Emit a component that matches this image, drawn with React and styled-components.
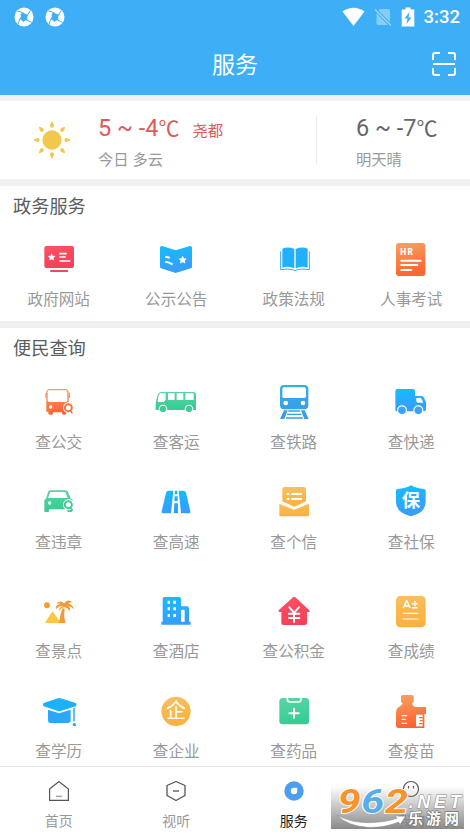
import styled, { createGlobalStyle } from 'styled-components'

const star = (cx, cy, r) => {
  const pts = []
  for (let i = 0; i < 10; i++) {
    const a = (Math.PI / 5) * i - Math.PI / 2
    const d = i % 2 ? r * 0.5 : r
    pts.push(`${(cx + d * Math.cos(a)).toFixed(1)},${(cy + d * Math.sin(a)).toFixed(1)}`)
  }
  return pts.join(' ')
}

const WebsiteIcon = () => (
  <g>
    <rect x='22' y='21' width='89' height='66' rx='6' fill='url(#red)' />
    <path d='M42 96H91' stroke='#f8465e' strokeWidth='6' strokeLinecap='round' />
    <polygon points={star(44, 55, 12)} fill='#fff' />
    <path d='M67 44H89M67 54H86M67 66H100' stroke='#fff' strokeWidth='5' />
  </g>
)

const NoticeIcon = () => (
  <g>
    <path d='M18 26Q18 20 24 21L65 34L108 21Q114 20 114 26V84Q114 87 111 88L65 102L21 88Q18 87 18 84Z' fill='url(#blue)' />
    <path d='M34 53L47 56M34 68L43 70L56 76' fill='none' stroke='#fff' strokeWidth='6' />
    <polygon points={star(86, 63, 13)} fill='#fff' />
  </g>
)

const LawIcon = () => (
  <g>
    <path d='M31 29Q48 22 67 30V88Q50 80 31 86Z M71 30Q90 22 107 29V86Q89 80 71 88Z' fill='#22b0fb' />
    <path d='M26 37V92Q48 88 61 92Q69 98 77 92Q90 88 112 92V37' fill='none' stroke='#3aa9f8' strokeWidth='3' />
  </g>
)

const ExamIcon = () => (
  <g>
    <rect x='21' y='12' width='88' height='99' rx='9' fill='url(#orange)' />
    <text x='34' y='47' fontSize='25' fontWeight='900' textLength='38' lengthAdjust='spacing' fontFamily='Roboto, sans-serif' fill='#fff'>HR</text>
    <path d='M37 65H95M37 78H85M37 93H67' stroke='#fff' strokeWidth='6' strokeLinecap='round' />
  </g>
)

const Magnifier = ({ color, y }) => (
  <g>
    <circle cx='95' cy={y} r='17' fill='#fff' />
    <circle cx='94' cy={y} r='10.5' fill='#fff' stroke={color} strokeWidth='6' />
    <path d={`M100 ${y + 9}L105 ${y + 15}`} stroke={color} strokeWidth='5' strokeLinecap='round' />
  </g>
)

const BusIcon = () => (
  <g>
    <path d='M38 21H84Q95 21 95 32V87H88V94Q88 98 84 98H79Q75 98 75 94V91H48V94Q48 98 44 98H38Q34 98 34 94V89H28V32Q28 21 38 21Z' fill='url(#orange)' />
    <path d='M27 34V46M97 34V46' stroke='#f6934f' strokeWidth='4' strokeLinecap='round' />
    <rect x='32' y='25' width='59' height='35' rx='5' fill='#fff' />
    <circle cx='41' cy='75' r='5' fill='#fff' />
    <Magnifier color='#f6763c' y={77} />
  </g>
)

const CoachIcon = () => (
  <g>
    <path d='M23 30H118Q126 30 126 38V84H5V67Q6 53 11 39Q14 30 23 30Z' fill='url(#green)' />
    <path d='M18 34H35V53L29 60H11Q11 48 15 38Z M42 34H62V54H42Z M68 34H88V54H68Z M94 34H119V54H94Z' fill='#fff' />
    <circle cx='27' cy='81' r='13' fill='#fff' />
    <circle cx='105' cy='81' r='13' fill='#fff' />
    <circle cx='27' cy='81' r='9.5' fill='#42ca94' />
    <circle cx='105' cy='81' r='9.5' fill='#42ca94' />
  </g>
)

const TrainIcon = () => (
  <g>
    <rect x='24' y='9' width='85' height='73' rx='12' fill='url(#train)' />
    <rect x='31' y='16' width='71' height='32' rx='5' fill='#fff' />
    <circle cx='41' cy='63' r='7' fill='#fff' />
    <circle cx='93' cy='63' r='7' fill='#fff' />
    <path d='M36 85H47L37 111H24Z M87 85H98L110 111H97Z' fill='#359ee8' />
    <path d='M49 87H84M45 97H88M42 108H92' stroke='#359ee8' strokeWidth='4' />
  </g>
)

const TruckIcon = () => (
  <g>
    <path d='M26 21H71Q78 21 78 28V42H98Q103 42 105 47L111 60V82Q111 88 105 88H24Q19 88 19 83V28Q19 21 26 21Z' fill='url(#blue)' />
    <path d='M82 48H96L103 62H87Q82 62 82 57Z' fill='#fff' />
    <circle cx='39' cy='85' r='15' fill='#fff' />
    <circle cx='88' cy='85' r='15' fill='#fff' />
    <circle cx='39' cy='85' r='11.5' fill='#37a5fb' />
    <circle cx='88' cy='85' r='11.5' fill='#37a5fb' />
  </g>
)

const CarIcon = () => (
  <g>
    <path d='M39 25H86Q91 25 93 30L100 48L107 54V85Q107 90 102 90H94Q91 90 91 87V82H36V86Q36 90 32 90H26Q22 90 22 86V55L28 48L33 30Q35 25 39 25Z' fill='url(#green)' />
    <path d='M40 30H85L92 48H33Z' fill='#fff' />
    <circle cx='38' cy='63' r='5' fill='#fff' />
    <Magnifier color='#42ca94' y={68} />
  </g>
)

const RoadIcon = () => (
  <g fill='url(#blue)'>
    <path d='M43 26H58L51 94H27Q22 94 23 88L36 32Q38 26 43 26Z' />
    <path d='M74 26H88Q94 26 96 32L109 88Q110 94 105 94H81Z' />
    <path d='M63 26H70V37H62Z M62 43H71V57H61Z M61 64H72V94H59Z' />
  </g>
)

const LetterIcon = () => (
  <g>
    <path d='M38 15H95Q102 15 102 22V58L67 74L31 58V22Q31 15 38 15Z' fill='url(#yellow)' />
    <path d='M22 65L66 83L111 65V98Q111 103 106 103H27Q22 103 22 98Z' fill='url(#yellow)' />
    <path d='M44 36H52M58 36H90M44 51H52M58 51H90' stroke='#fff' strokeWidth='6' />
  </g>
)

const ShieldIcon = () => (
  <g>
    <path d='M66 10Q82 20 105 21Q110 21 110 26V60Q110 92 66 103Q21 92 21 60V26Q21 21 26 21Q50 20 66 10Z' fill='url(#blue)' />
    <text x='66' y='76' fontSize='55' fontWeight='700' textAnchor='middle' fill='#fff'>保</text>
  </g>
)

const SceneryIcon = () => (
  <g>
    <circle cx='30' cy='43' r='9' fill='#f5a02c' />
    <path d='M24 96L43 65Q46 60 50 65L72 96Z' fill='#fbc83f' />
    <path d='M66 96Q70 67 77 51L83 53Q79 74 85 96Z' fill='#f39a33' />
    <path d='M79 46Q67 43 57 54Q54 40 71 39Q64 36 58 40Q66 24 82 37Q91 22 107 34Q98 34 94 38Q109 40 111 56Q103 46 92 46Q102 50 99 60Q91 49 82 48Q72 50 66 60Q65 50 79 46Z' fill='#f39a33' />
  </g>
)

const HotelIcon = () => (
  <g>
    <path d='M31 18H75Q81 18 81 24V46H98Q105 46 105 53V92H110V101H22V92H26V24Q26 18 31 18Z' fill='url(#blue)' />
    <path d='M41 29H48V38H41ZM58 29H66V38H58ZM41 49H48V58H41ZM58 49H66V58H58ZM41 69H48V78H41ZM58 69H66V78H58ZM81 56H92V92H81Z' fill='#fff' />
  </g>
)

const FundIcon = () => (
  <g>
    <path d='M63 19Q66 16 70 19L112 58Q115 63 111 63H105V95Q105 102 98 102H35Q28 102 28 95V63H22Q18 62 20 58Z' fill='url(#red)' />
    <path d='M52 49L66 65L81 49M66 65V93M51 68H82M51 81H82' fill='none' stroke='#fff' strokeWidth='6' strokeLinecap='round' />
  </g>
)

const GradeIcon = () => (
  <g>
    <rect x='21' y='15' width='89' height='94' rx='13' fill='url(#yellow)' />
    <path d='M43 51L52 30H54L63 51M46 45H60M69 38H86M78 30V46M69 50H86' fill='none' stroke='#fff' strokeWidth='4.5' />
    <path d='M43 67H87M43 84H87' stroke='#fff' strokeWidth='3.5' strokeLinecap='round' />
  </g>
)

const DegreeIcon = () => (
  <g>
    <path d='M63 22Q67 20 71 22L116 36Q121 39 116 46L71 60Q67 62 63 60L20 46Q15 41 20 36Z' fill='#1bb2fb' />
    <path d='M33 56L66 67L101 56V88Q101 96 93 96H41Q33 96 33 88Z' fill='#2ca7fc' />
    <path d='M111 50V91' stroke='#2ca7fc' strokeWidth='4.5' />
    <circle cx='112' cy='101' r='5' fill='#2ca7fc' />
  </g>
)

const CompanyIcon = () => (
  <g>
    <circle cx='66' cy='61' r='44' fill='url(#yellow)' />
    <text x='66' y='81' fontSize='60' fontWeight='400' textAnchor='middle' fill='#fff'>企</text>
  </g>
)

const MedicineIcon = () => (
  <g>
    <rect x='22' y='21' width='89' height='79' rx='10' fill='url(#green)' />
    <path d='M46 21V25Q46 33 54 33H79Q87 33 87 25V21' fill='none' stroke='#fff' strokeWidth='5' />
    <path d='M66 53V80M52 67H80' stroke='#fff' strokeWidth='6' strokeLinecap='round' />
  </g>
)

const VaccineIcon = () => (
  <g>
    <path d='M41 12H69Q74 12 74 18V30Q74 36 69 36V38Q71 46 82 48H111V69H106V111H29Q21 111 21 103V64Q22 51 34 45Q40 42 41 36Q36 36 36 30V18Q36 12 41 12Z' fill='url(#orange)' />
    <path d='M38 74H54M38 85H50M38 97H54' stroke='#fff' strokeWidth='4' />
    <path d='M81 71H101V106H81Z' fill='#fff' />
    <path d='M101 80H90M101 89H92M101 98H90' stroke='#f86e37' strokeWidth='4' />
  </g>
)

const govItems = [
  { name: '政府网站', icon: WebsiteIcon },
  { name: '公示公告', icon: NoticeIcon },
  { name: '政策法规', icon: LawIcon },
  { name: '人事考试', icon: ExamIcon },
]

const queryRows = [
  [
    { name: '查公交', icon: BusIcon },
    { name: '查客运', icon: CoachIcon },
    { name: '查铁路', icon: TrainIcon },
    { name: '查快递', icon: TruckIcon },
  ],
  [
    { name: '查违章', icon: CarIcon },
    { name: '查高速', icon: RoadIcon },
    { name: '查个信', icon: LetterIcon },
    { name: '查社保', icon: ShieldIcon },
  ],
  [
    { name: '查景点', icon: SceneryIcon },
    { name: '查酒店', icon: HotelIcon },
    { name: '查公积金', icon: FundIcon },
    { name: '查成绩', icon: GradeIcon },
  ],
  [
    { name: '查学历', icon: DegreeIcon },
    { name: '查企业', icon: CompanyIcon },
    { name: '查药品', icon: MedicineIcon },
    { name: '查疫苗', icon: VaccineIcon },
  ],
]

const gradients = [
  ['red', '#fb5263', '#f5405b'],
  ['blue', '#14bdfb', '#389dfc'],
  ['orange', '#f8a162', '#fb6531'],
  ['green', '#5bd5a5', '#36cd94'],
  ['yellow', '#f8c063', '#fbb13d'],
  ['train', '#30b5d8', '#3a9dee'],
]

const Gradients = () => (
  <GradientDefs width='0' height='0'>
    <defs>
      {gradients.map(([id, from, to]) => (
        <linearGradient key={id} id={id} x1='0' y1='0' x2='0.2' y2='1'>
          <stop offset='0' stopColor={from} />
          <stop offset='1' stopColor={to} />
        </linearGradient>
      ))}
    </defs>
  </GradientDefs>
)

const AppBadge = () => (
  <svg width='20' height='20' viewBox='0 0 60 60'>
    <circle cx='30' cy='30' r='28.5' fill='#fff' />
    <path d='M27 16Q31 22 42 23Q38 29 40 40Q34 38 27 46Q26 38 16 36Q23 29 20 20Q24 20 27 16Z' fill='#3eaef6' />
    <g fill='none' stroke='#3eaef6' strokeWidth='3'>
      <path d='M26 17Q19 14 10 12' />
      <path d='M41 24Q44 14 50 11' />
      <path d='M38 39Q46 44 53 46' />
      <path d='M18 36Q14 44 12 51' />
    </g>
  </svg>
)

const ServiceItem = ({ item }) => {
  const Icon = item.icon
  return (
    <Item>
      <svg width='44' height='40' viewBox='0 0 132 120'>
        <Icon />
      </svg>
      <ItemName>{item.name}</ItemName>
    </Item>
  )
}

const Watermark = () => (
  <WatermarkBox>
    <svg width='133' height='43' viewBox='0 0 399 129'>
      <g fontFamily='Roboto, sans-serif' fontWeight='700' fontStyle='italic' stroke='#fff' strokeWidth='5' paintOrder='stroke' fontSize='100'>
        <text x='20' y='80' textLength='69' lengthAdjust='spacingAndGlyphs' fill='#f7942b'>9</text>
        <text x='91' y='80' textLength='69' lengthAdjust='spacingAndGlyphs' fill='#5aaee6'>6</text>
        <text x='162' y='80' textLength='69' lengthAdjust='spacingAndGlyphs' fill='#f7942b'>2</text>
      </g>
      <text x='233' y='65' fontSize='54' fontWeight='700' fontFamily='"Liberation Sans", sans-serif' fontStyle='italic' textLength='156' lengthAdjust='spacing' fill='#fff' stroke='#888' strokeWidth='3' paintOrder='stroke'>.NET</text>
      <path d='M18 88Q60 110 110 110Q160 110 198 97L193 90L223 91L207 116L203 108Q160 126 110 124Q50 120 18 88Z' fill='#fff' stroke='#888' strokeWidth='1.5' />
      <text x='232' y='115' fontSize='44' fontWeight='700' textLength='152' fill='#fff' stroke='#777' strokeWidth='4' paintOrder='stroke'>乐游网</text>
    </svg>
  </WatermarkBox>
)

const App = () => {
  return (
    <Page>
      <GlobalStyle />
      <Gradients />
      <Header>
        <StatusBar>
          <StatusGroup $gap='11.5px'>
            <AppBadge />
            <AppBadge />
          </StatusGroup>
          <StatusGroup $gap='9px'>
            <svg width='23' height='20' viewBox='0 0 23 20'>
              <path d='M.5 4.5Q11.5-3 22.5 4.5L11.5 19Z' fill='#fff' />
            </svg>
            <svg width='18' height='20' viewBox='0 0 18 20'>
              <path d='M6 2H14.5Q16 2 16 3.5V15L4.5 3.5ZM2.5 6L14 18H4Q2.5 18 2.5 16.5Z' fill='#fff' opacity='.38' />
              <path d='M1 2.5L17 18.5' stroke='#fff' strokeWidth='1.3' opacity='.5' />
            </svg>
            <svg width='14' height='20' viewBox='0 0 14 20'>
              <path d='M4.5 .5H9.5V2.5H13.3V19.5H.7V2.5H4.5Z' fill='#fff' />
              <path d='M8.500 5L3.500 11.500H6.500L5.500 17L10.500 10.500H7.500Z' fill='#3eaef6' />
            </svg>
            <Clock>3:32</Clock>
          </StatusGroup>
        </StatusBar>
        <TitleBar>
          <span />
          <Title>服务</Title>
          <svg width='26' height='26' viewBox='0 0 26 26' fill='none' stroke='#fff' strokeWidth='2'>
            <path d='M2 9V4Q2 2 4 2H9M17 2H22Q24 2 24 4V9M24 17V22Q24 24 22 24H17M9 24H4Q2 24 2 22V17M2 13H24' />
          </svg>
        </TitleBar>
      </Header>

      <Weather>
        <Today>
          <svg width='40' height='40' viewBox='0 0 120 120' fill='#f2c74e'>
            <circle cx='60' cy='60' r='29' />
            {[0, 45, 90, 135, 180, 225, 270, 315].map((deg) => (
              <path key={deg} d='M60 4Q66 13 66 17A6 6 0 0 1 54 17Q54 13 60 4Z' transform={`rotate(${deg} 60 60)`} />
            ))}
          </svg>
          <div>
            <Temp className='today'>
              5 ~ -4<i>℃</i> <City>尧都</City>
            </Temp>
            <Sky>今日 多云</Sky>
          </div>
        </Today>
        <Tomorrow>
          <Temp>
            6 ~ -7<i>℃</i>
          </Temp>
          <Sky>明天晴</Sky>
        </Tomorrow>
      </Weather>

      <Section>
        <SectionTitle>政务服务</SectionTitle>
        <Row>
          {govItems.map((item) => (
            <ServiceItem key={item.name} item={item} />
          ))}
        </Row>
      </Section>

      <Section className='query'>
        <SectionTitle>便民查询</SectionTitle>
        {queryRows.map((row, i) => (
          <Row key={i} $top={[0, 28, 37, 28][i]}>
            {row.map((item) => (
              <ServiceItem key={item.name} item={item} />
            ))}
          </Row>
        ))}
      </Section>

      <TabBar>
        <Tab>
          <svg width='22' height='22' viewBox='0 0 22 22' fill='none' stroke='#555' strokeWidth='1.2'>
            <path d='M1.6 9L11 1.5L20.4 9V20.3H1.6Z' />
            <path d='M8 16.3H14' stroke='#999' />
          </svg>
          首页
        </Tab>
        <Tab>
          <svg width='22' height='22' viewBox='0 0 22 22' fill='none' stroke='#555' strokeWidth='1.3'>
            <path d='M11 1.5L20 5.5V15.5L11 20.5L2 15.5V5.5Z' strokeLinejoin='round' />
            <path d='M8 11H14' />
          </svg>
          视听
        </Tab>
        <Tab $active>
          <svg width='22' height='22' viewBox='0 0 22 22'>
            <circle cx='11' cy='11' r='9.7' fill='#4d9eed' />
            <path d='M14.2 7.8V11A3.2 3.2 0 1 1 11 7.8Z' fill='#fff' />
          </svg>
          服务
        </Tab>
        <Tab>
          <svg width='22' height='22' viewBox='0 0 22 22' fill='none' stroke='#555' strokeWidth='1.2'>
            <circle cx='11' cy='9' r='7.5' />
            <path d='M8.5 6V8.5M13.5 6V8.5' />
          </svg>
          我的
        </Tab>
        <Watermark />
      </TabBar>
    </Page>
  )
}

const GlobalStyle = createGlobalStyle`
  * {
    box-sizing: border-box;
  }
  body {
    margin: 0;
    background-color: #fff;
    font-family: Roboto, "Noto Sans CJK SC", sans-serif;
  }
  svg {
    display: block;
    flex-shrink: 0;
  }
`
const GradientDefs = styled.svg`
  position: absolute;
`
const Page = styled.div`
  display: flex;
  flex-direction: column;
  width: 470px;
  height: 835px;
  overflow: hidden;
  background-color: #fff;
`
const Header = styled.header`
  height: 95px;
  background-color: #3eaef6;
  color: #fff;
`
const StatusBar = styled.div`
  display: flex;
  justify-content: space-between;
  align-items: center;
  height: 33px;
  padding: 0 10px 0 13.5px;
`
const StatusGroup = styled.div`
  display: flex;
  align-items: center;
  gap: ${(props) => props.$gap};
`
const Clock = styled.span`
  font-size: 18.5px;
  font-weight: 500;
  line-height: 20px;
`
const TitleBar = styled.div`
  display: grid;
  grid-template-columns: 26px 1fr 26px;
  align-items: center;
  height: 62px;
  padding: 0 13px;
`
const Title = styled.h1`
  margin: 0;
  padding-top: 3px;
  text-align: center;
  font-size: 23px;
  font-weight: 400;
  line-height: 32px;
`
const Weather = styled.section`
  display: flex;
  align-items: center;
  height: 91px;
  border-top: 6px solid #f0f0f0;
  border-bottom: 7px solid #f0f0f0;
`
const Today = styled.div`
  display: flex;
  align-items: center;
  gap: 26px;
  width: 317px;
  height: 48px;
  padding-left: 32px;
  border-right: 1px solid #ececec;
`
const Tomorrow = styled.div`
  padding-left: 39px;
`
const Temp = styled.div`
  display: flex;
  align-items: baseline;
  height: 32px;
  padding-top: 4px;
  font-size: 23.5px;
  line-height: 28px;
  white-space: pre;
  color: #666;
  i {
    font-style: normal;
    font-size: 21px;
  }
  &.today {
    color: #de5a5a;
  }
`
const City = styled.span`
  margin-left: 13px;
  font-size: 15.3px;
`
const Sky = styled.div`
  font-size: 15.3px;
  line-height: 24px;
  margin-top: 4px;
  padding-top: 2px;
  margin-bottom: -2px;
  color: #999;
`
const Section = styled.section`
  height: 142px;
  border-bottom: 7px solid #f0f0f0;
  &.query {
    flex: 1;
    border-bottom: none;
    h2 {
      margin-bottom: 12px;
    }
  }
`
const SectionTitle = styled.h2`
  margin: 0 0 11px;
  padding-left: 13px;
  font-size: 18.2px;
  font-weight: 400;
  line-height: 42px;
  color: #5c5c5c;
`
const Row = styled.div`
  display: grid;
  grid-template-columns: repeat(4, 1fr);
  margin-top: ${(props) => props.$top || 0}px;
`
const Item = styled.div`
  display: flex;
  flex-direction: column;
  align-items: center;
  gap: 10px;
  svg {
    font-family: "Noto Sans CJK SC", sans-serif;
  }
`
const ItemName = styled.span`
  font-size: 15.6px;
  line-height: 22px;
  color: #999;
`
const TabBar = styled.nav`
  position: relative;
  display: grid;
  grid-template-columns: repeat(4, 1fr);
  height: 69px;
  border-top: 1px solid #e8e8e8;
  background-color: #fff;
`
const Tab = styled.div`
  display: flex;
  flex-direction: column;
  align-items: center;
  gap: 9px;
  padding-top: 13px;
  font-size: 14px;
  line-height: 20px;
  color: ${(props) => (props.$active ? '#222' : '#999')};
`
const WatermarkBox = styled.div`
  position: absolute;
  right: 6px;
  bottom: 6px;
  background: linear-gradient(rgba(150, 150, 150, 0), rgba(125, 125, 125, 0.9));
  svg {
    font-family: "Noto Sans CJK SC", sans-serif;
  }
`

export default App
